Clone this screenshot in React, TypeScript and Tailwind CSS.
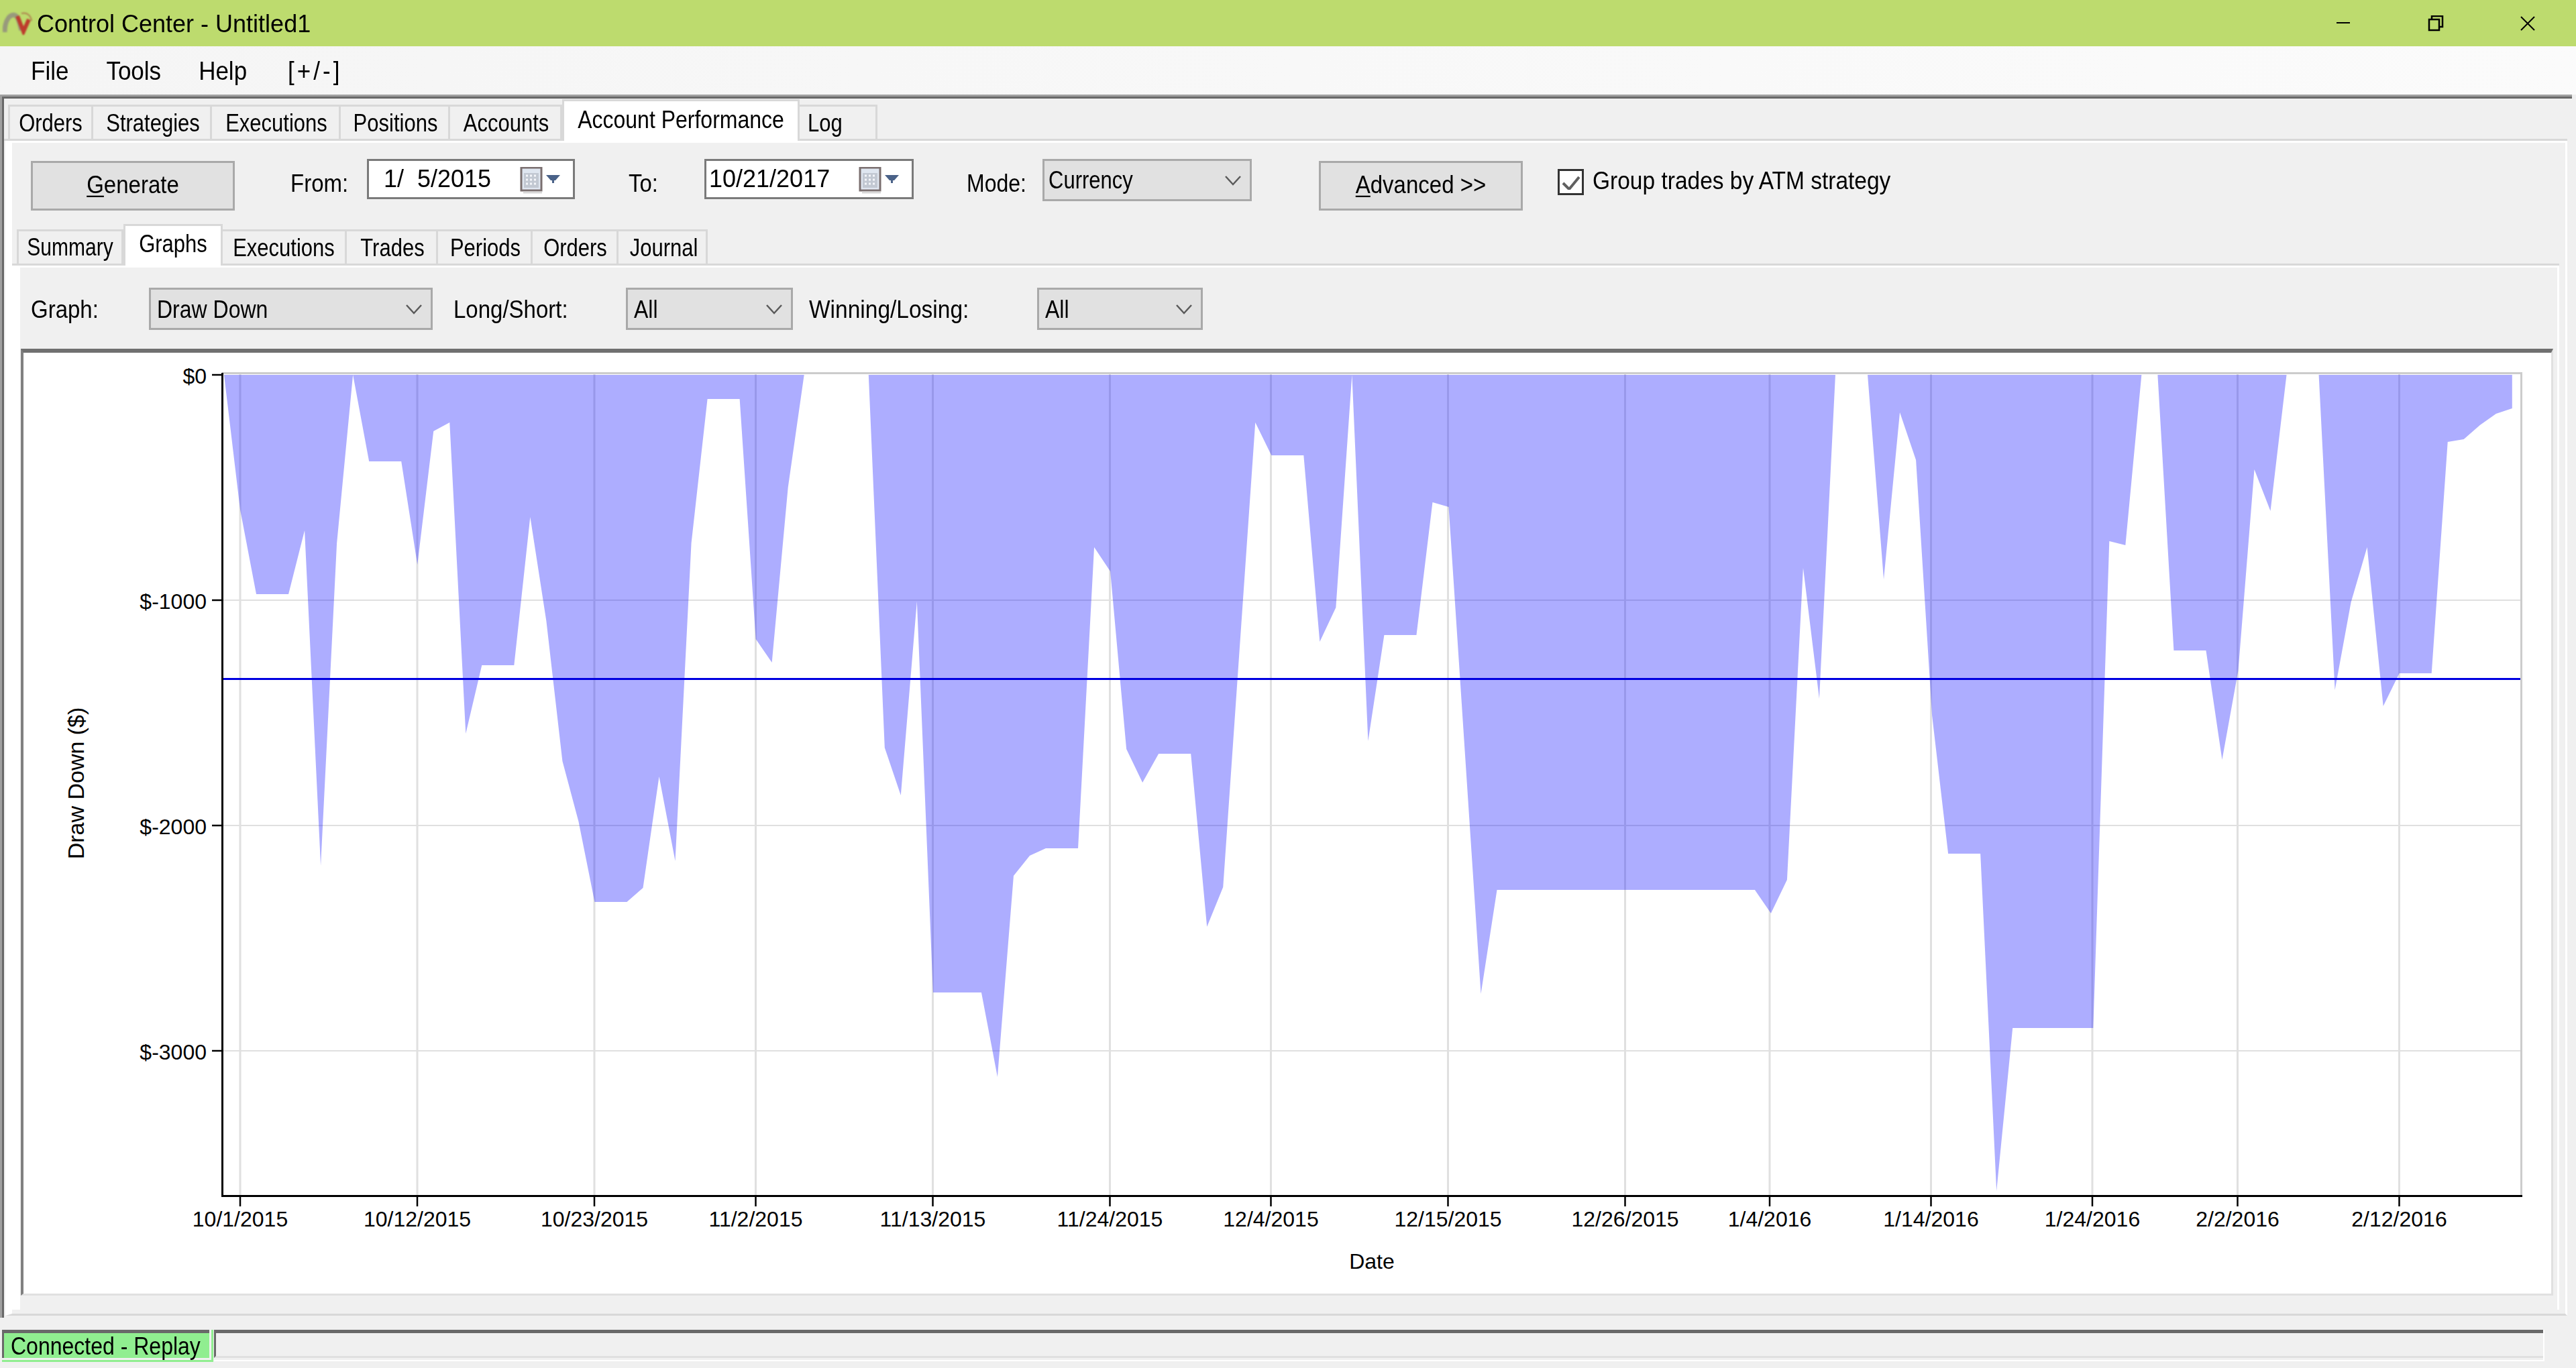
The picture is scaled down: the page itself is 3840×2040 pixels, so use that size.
import type { ReactNode } from "react";

const tabText = "text-[31px] scale-y-[1.2]";

const mainTabs = [
  { label: "Orders", w: "w-[127px]" },
  { label: "Strategies", w: "w-[177px]", justify: "justify-center pl-[4px]" },
  { label: "Executions", w: "w-[192px]", justify: "justify-center pl-[3px]" },
  { label: "Positions", w: "w-[163px]", justify: "justify-center pl-[3px]" },
  { label: "Accounts", w: "w-[167px]", justify: "justify-center pl-[3px]" },
  { label: "Account Performance", w: "w-[354px]", active: true },
  { label: "Log", w: "w-[116px]", justify: "justify-start pl-[12px]" },
];

const subTabs = [
  { label: "Summary", w: "w-[159px]", size: "text-[30px] scale-y-[1.2]" },
  { label: "Graphs", w: "w-[148px]", active: true },
  { label: "Executions", w: "w-[185px]" },
  { label: "Trades", w: "w-[136px]", justify: "justify-center pl-[3px]" },
  { label: "Periods", w: "w-[141px]", justify: "justify-center pl-[3px]" },
  { label: "Orders", w: "w-[128px]", justify: "justify-center pl-[2px]" },
  { label: "Journal", w: "w-[133px]", justify: "justify-center pl-[5px]" },
];

// vertices of the draw down area: [bar index, page y]
const drawDown: [number, number][] = [
  [-1, 559], [0, 760], [1, 886], [3, 886], [4, 791], [5, 1291], [6, 810], [7, 559], [8, 688], [10, 688],
  [11, 842], [12, 643], [13, 630], [14, 1094], [15, 992], [17, 992], [18, 771], [19, 926], [20, 1135],
  [21, 1225], [22, 1345], [24, 1345], [25, 1324], [26, 1158], [27, 1284], [28, 810], [29, 595], [31, 595],
  [32, 953], [33, 988], [34, 727], [35, 559], [39, 559], [40, 1115], [41, 1186], [42, 897], [43, 1480],
  [46, 1480], [47, 1606], [48, 1306], [49, 1276], [50, 1265], [52, 1265], [53, 816], [54, 852], [55, 1117],
  [56, 1167], [57, 1124], [59, 1124], [60, 1382], [61, 1323], [62, 976], [63, 630], [64, 679], [66, 679],
  [67, 957], [68, 906], [69, 559], [70, 1105], [71, 947], [73, 947], [74, 749], [75, 756], [76, 1119],
  [77, 1482], [78, 1327], [94, 1327], [95, 1362], [96, 1312], [97, 847], [98, 1042], [99, 559], [101, 559],
  [102, 864], [103, 615], [104, 686], [105, 1067], [106, 1273], [108, 1273], [109, 1776], [110, 1533],
  [115, 1533], [116, 807], [117, 813], [118, 559], [119, 559], [120, 970], [122, 970], [123, 1133],
  [124, 1000], [125, 700], [126, 762], [127, 559], [129, 559], [130, 1029], [131, 898], [132, 816],
  [133, 1053], [134, 1004], [136, 1004], [137, 659], [138, 655], [139, 634], [140, 617], [141, 609], [141, 559],
];

const areaPoints = drawDown.map(([k, y]) => `${358 + 24.02 * k},${y}`).join(" ");

const xTicks = [
  { x: 358, label: "10/1/2015" },
  { x: 622, label: "10/12/2015" },
  { x: 886, label: "10/23/2015" },
  { x: 1126.5, label: "11/2/2015" },
  { x: 1390.5, label: "11/13/2015" },
  { x: 1654.5, label: "11/24/2015" },
  { x: 1894.5, label: "12/4/2015" },
  { x: 2158.5, label: "12/15/2015" },
  { x: 2422.5, label: "12/26/2015" },
  { x: 2638, label: "1/4/2016" },
  { x: 2878.5, label: "1/14/2016" },
  { x: 3119, label: "1/24/2016" },
  { x: 3335.5, label: "2/2/2016" },
  { x: 3576.5, label: "2/12/2016" },
];

const yTicks = [
  { y: 559, label: "$0" },
  { y: 895, label: "$-1000" },
  { y: 1231, label: "$-2000" },
  { y: 1567, label: "$-3000" },
];

function Txt({
  children,
  size = "text-[34px] scale-y-[1.12]",
  className = "",
}: {
  children: ReactNode;
  size?: string;
  className?: string;
}) {
  return <span className={`inline-block whitespace-pre leading-none text-black ${size} ${className}`}>{children}</span>;
}

function Tab({
  label,
  w,
  active,
  justify = "justify-center",
  size = tabText,
}: {
  label: string;
  w: string;
  active?: boolean;
  justify?: string;
  size?: string;
}) {
  if (active) {
    return (
      <div className={`-mb-[3px] flex h-[62px] ${w} items-center justify-center border-x-[3px] border-t-[3px] border-[#d8d8d8] bg-white pb-[6px]`}>
        <Txt size={label === "Graphs" ? size : "text-[32px] scale-y-[1.18]"}>{label}</Txt>
      </div>
    );
  }
  return (
    <div className={`flex h-[51px] ${w} items-center ${justify} border-r-[3px] border-t-[3px] border-[#d8d8d8] first:border-l-[3px]`}>
      <Txt size={size}>{label}</Txt>
    </div>
  );
}

function Chevron() {
  return (
    <svg className="h-[16px] w-[26px]" viewBox="0 0 26 16" fill="none">
      <path d="M2 2 13 14 24 2" stroke="#5a5a5a" strokeWidth="2.5" />
    </svg>
  );
}

function Select({ value, size, className }: { value: string; size?: string; className: string }) {
  return (
    <div className={`flex h-[63px] items-center justify-between border-[3px] border-[#a9a9a9] bg-[#e1e1e1] pr-[12px] ${className}`}>
      <Txt size={size}>{value}</Txt>
      <Chevron />
    </div>
  );
}

function PushButton({ children, className }: { children: ReactNode; className: string }) {
  return (
    <div className={`mt-[27px] flex h-[74px] w-[304px] items-center justify-center border-[3px] border-[#a9a9a9] bg-[#e1e1e1] ${className}`}>
      <Txt size="text-[33px] scale-y-[1.12]" className="-mt-[4px]">
        {children}
      </Txt>
    </div>
  );
}

function DateBox({ value, className }: { value: string; className: string }) {
  return (
    <div className={`relative mt-[24px] flex h-[60px] items-center border-[3px] border-[#7a7a7a] bg-white ${className}`}>
      <Txt size="text-[36px] scale-y-[1.05]" className="-mt-[3px]">
        {value}
      </Txt>
      <svg className="absolute right-[18px] top-[9px] h-[42px] w-[62px]" viewBox="0 0 62 42" fill="none">
        <rect x="3" y="1" width="30" height="34" fill="#dfe6f0" stroke="#7a6f6f" strokeWidth="3" />
        <rect x="7" y="9" width="22" height="22" fill="#c2c8d2" />
        <path d="M10 13h3M16 13h3M22 13h3M10 19h3M16 19h3M22 19h3M10 25h3M16 25h3M22 25h3" stroke="#f4f6fa" strokeWidth="3" />
        <path d="M6 38h28" stroke="#d8d8d8" strokeWidth="3" />
        <path d="M40 12h21l-7 8h-2v4h-3v-4h-2z" fill="#4a6288" />
      </svg>
    </div>
  );
}

export default function App() {
  return (
    <div className="flex h-[2040px] w-[3840px] flex-col overflow-hidden bg-[#f0f0f0] font-['Liberation_Sans',sans-serif]">
      {/* title bar */}
      <div className="flex h-[69px] items-center bg-[#bddb6e]">
        <svg className="ml-[4px] h-[34px] w-[46px] blur-[1px]" viewBox="0 0 46 34" fill="none">
          <path d="M3 30C3 12 11 2 19 5c5 3 6 12 9 22" stroke="#8f8a80" strokeWidth="7" opacity="0.8" />
          <path d="M22 6l9 23 8-18" stroke="#bd3b2c" strokeWidth="6" />
          <path d="M28 2c8-2 14 3 15 11" stroke="#a85a40" strokeWidth="2" opacity="0.7" />
        </svg>
        <Txt size="text-[36px] scale-y-[1.02]" className="ml-[5px] mt-[2px]">
          Control Center - Untitled1
        </Txt>
        <svg className="ml-auto mr-[60px] h-[24px] w-[300px]" viewBox="0 0 300 24" fill="none" stroke="#000" strokeWidth="2">
          <path d="M3 11h20" />
          <path d="M145 5V1h16v16h-5" strokeWidth="2.5" />
          <rect x="141" y="6" width="15" height="16" strokeWidth="2.5" />
          <path d="M278 2l20 20M298 2l-20 20" />
        </svg>
      </div>

      {/* menu bar */}
      <div className="flex h-[72px] items-center gap-[56px] bg-gradient-to-r from-[#f5f5f5] to-[#fbfbfb] pl-[46px]">
        <Txt size="text-[35px] scale-y-[1.1]">File</Txt>
        <Txt size="text-[35px] scale-y-[1.1]">Tools</Txt>
        <Txt size="text-[35px] scale-y-[1.1]">Help</Txt>
        <Txt size="text-[35px] scale-y-[1.1]" className="ml-[5px] tracking-[4px]">
          [+/-]
        </Txt>
      </div>

      {/* main frame */}
      <div className="h-[1824px] w-[3834px] border-l-[3px] border-t-[3px] border-[#a0a0a0]">
        <div className="h-full border-l-[3px] border-t-[3px] border-[#696969]">
          <div className="flex h-[63px] w-[3821px] items-end border-b-[3px] border-[#d8d8d8] pl-[6px]">
            {mainTabs.map((t) => (
              <Tab key={t.label} {...t} />
            ))}
          </div>

          {/* account performance page */}
          <div className="ml-[2px] h-[1752px] w-[3819px] border-b-[3px] border-l-[10px] border-r-[3px] border-t-[3px] border-[#ffffff] border-b-[#d8d8d8]">
            <div className="flex h-[121px] items-start">
              <PushButton className="ml-[28px]">
                <span className="underline decoration-2 underline-offset-[3px]">G</span>enerate
              </PushButton>
              <div className="ml-[83px] mt-[44px] w-[114px]">
                <Txt size="text-[33px] scale-y-[1.12]">From:</Txt>
              </div>
              <DateBox value="1/  5/2015" className="w-[310px] pl-[22px]" />
              <div className="ml-[80px] mt-[44px] w-[113px]">
                <Txt size="text-[33px] scale-y-[1.12]">To:</Txt>
              </div>
              <DateBox value="10/21/2017" className="w-[312px] pl-[4px]" />
              <div className="ml-[79px] mt-[44px] w-[113px]">
                <Txt size="text-[32px] scale-y-[1.15]">Mode:</Txt>
              </div>
              <Select value="Currency" size="text-[31px] scale-y-[1.18]" className="mt-[24px] w-[312px] pl-[6px]" />
              <PushButton className="ml-[100px]">
                <span className="underline decoration-2 underline-offset-[3px]">A</span>dvanced &gt;&gt;
              </PushButton>
              <div className="ml-[52px] mt-[39px] flex h-[39px] w-[39px] items-center justify-center border-[3px] border-[#333333] bg-white">
                <svg className="h-[24px] w-[28px]" viewBox="0 0 28 24" fill="none">
                  <path d="M2 13l8 8 2 0L26 4" stroke="#606060" strokeWidth="4" />
                </svg>
              </div>
              <div className="ml-[13px] mt-[40px]">
                <Txt size="text-[33.5px] scale-y-[1.12]">Group trades by ATM strategy</Txt>
              </div>
            </div>

            <div className="flex h-[62px] w-[3797px] items-end border-b-[3px] border-[#d8d8d8] pl-[7px]">
              {subTabs.map((t) => (
                <Tab key={t.label} {...t} />
              ))}
            </div>

            {/* graphs page */}
            <div className="h-[1557px] w-[3797px] border-l-[12px] border-r-[3px] border-t-[3px] border-white">
              <div className="flex h-[121px] items-start pt-[30px]">
                <div className="ml-[16px] mt-[16px] w-[176px]">
                  <Txt size="text-[33px] scale-y-[1.12]">Graph:</Txt>
                </div>
                <Select value="Draw Down" size="text-[32px] scale-y-[1.15]" className="w-[423px] pl-[9px]" />
                <div className="ml-[31px] mt-[16px] w-[257px]">
                  <Txt size="text-[33px] scale-y-[1.12]">Long/Short:</Txt>
                </div>
                <Select value="All" size="text-[32px] scale-y-[1.15]" className="w-[249px] pl-[9px]" />
                <div className="ml-[24px] mt-[16px] w-[340px]">
                  <Txt size="text-[33.5px] scale-y-[1.12]">Winning/Losing:</Txt>
                </div>
                <Select value="All" size="text-[32px] scale-y-[1.15]" className="w-[247px] pl-[9px]" />
              </div>

              {/* chart */}
              <div className="ml-[1px] h-[1412px] w-[3775px] border-b-[3px] border-l-[4px] border-r-[3px] border-t-[6px] border-[#e0e0e0] border-l-[#808080] border-t-[#707070] bg-white">
                <svg className="block h-[1403px] w-[3768px]" viewBox="35 526 3768 1403">
                  <rect x="331" y="555" width="3429" height="3" fill="#cccccc" />
                  <rect x="3757" y="555" width="3" height="1228" fill="#cccccc" />
                  {yTicks.slice(1).map((t) => (
                    <line key={t.y} x1="333" x2="3757" y1={t.y} y2={t.y} stroke="#e0e0e0" strokeWidth="2" />
                  ))}
                  {xTicks.map((t) => (
                    <line key={t.x} x1={t.x} x2={t.x} y1="558" y2="1782" stroke="#e0e0e0" strokeWidth="3" />
                  ))}
                  <polygon points={areaPoints} fill="#0000ff" fillOpacity="0.32" />
                  <rect x="333" y="1011" width="3424" height="3" fill="#0000e0" />
                  <rect x="330" y="556" width="3" height="1229" fill="#000000" />
                  <rect x="330" y="1782" width="3430" height="3" fill="#000000" />
                  {yTicks.map((t) => (
                    <g key={t.y}>
                      <line x1="316" x2="331" y1={t.y} y2={t.y} stroke="#000000" strokeWidth="2.5" />
                      <text x="308" y={t.y + 13} textAnchor="end" fontSize="32" fill="#000000">
                        {t.label}
                      </text>
                    </g>
                  ))}
                  {xTicks.map((t) => (
                    <g key={t.label}>
                      <line x1={t.x} x2={t.x} y1="1785" y2="1799" stroke="#000000" strokeWidth="2.5" />
                      <text x={t.x} y="1829" textAnchor="middle" fontSize="32" fill="#000000">
                        {t.label}
                      </text>
                    </g>
                  ))}
                  <text x="2045" y="1892" textAnchor="middle" fontSize="32" fill="#000000">
                    Date
                  </text>
                  <text transform="translate(125 1168) rotate(-90)" textAnchor="middle" fontSize="34" fill="#000000">
                    Draw Down ($)
                  </text>
                </svg>
              </div>
              <div className="mt-[3px] h-[9px] bg-[#f0f0f0]" />
            </div>
          </div>
        </div>
      </div>

      {/* status bar */}
      <div className="mt-[18px] flex h-[47px] items-start pl-[3px]">
        <div className="flex h-[48px] w-[315px] border-b-[3px] border-r-[3px] border-[#90ee90]">
          <div className="flex h-[42px] w-[309px] items-center border-l-[3px] border-t-[5px] border-[#696969] bg-[#90ee90] pl-[10px]">
            <Txt size="text-[32px] scale-y-[1.15]">Connected - Replay</Txt>
          </div>
        </div>
        <div className="ml-[1px] h-[47px] w-[3474px] border-b-[2px] border-r-[2px] border-white">
          <div className="h-[42px] border-b-[3px] border-l-[3px] border-t-[5px] border-[#e0e0e0] border-l-[#696969] border-t-[#696969]" />
        </div>
      </div>
    </div>
  );
}
